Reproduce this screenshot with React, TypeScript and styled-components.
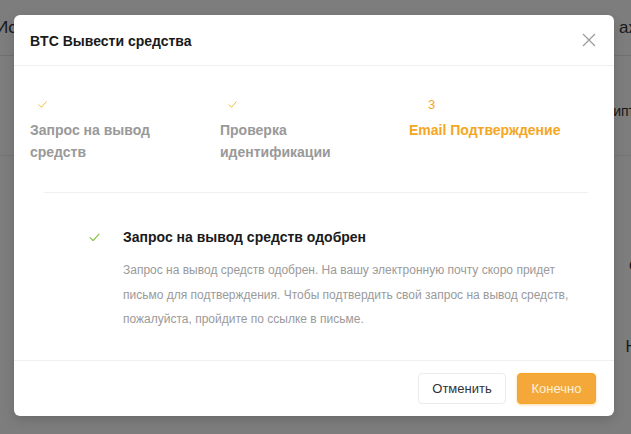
import React from "react";
import styled, { createGlobalStyle } from "styled-components";

const Global = createGlobalStyle`
  html, body { margin: 0; padding: 0; }
  *, *::before, *::after { box-sizing: border-box; }
  body {
    width: 631px; height: 434px; overflow: hidden;
    font-family: "Liberation Sans", Arial, sans-serif;
    background: #ffffff;
  }
`;

const Page = styled.div`
  position: relative;
  width: 631px;
  height: 434px;
  overflow: hidden;
  background: #fafafa;
`;

const PageTop = styled.div`
  display: flex;
  justify-content: space-between;
  align-items: center;
  height: 56px;
  border-bottom: 1px solid #e0e0e0;
  font-size: 17px;
  color: #333;
  margin-left: -4px;
  margin-right: -6px;
`;

const PageRow = styled.div`
  display: flex;
  justify-content: flex-end;
  align-items: center;
  height: 100px;
  padding-top: 10px;
  font-size: 14px;
  color: #333;
  border-bottom: 1px solid #e8e8e8;
  margin-right: -4px;
`;

const PageSide = styled.div`
  display: flex;
  flex-direction: column;
  align-items: flex-end;
  gap: 64px;
  padding-top: 100px;
  font-size: 16px;
  color: #333;
  margin-right: -6px;
`;

const Overlay = styled.div`
  position: absolute;
  inset: 0;
  background: rgba(0, 0, 0, 0.5);
`;

const Modal = styled.div`
  position: absolute;
  left: 14px;
  top: 15px;
  width: 600px;
  height: 401px;
  background: #fff;
  border-radius: 6px;
  display: flex;
  flex-direction: column;
  box-shadow: 0 4px 12px rgba(0, 0, 0, 0.15);
`;

const Header = styled.div`
  display: flex;
  align-items: center;
  justify-content: space-between;
  height: 51px;
  padding: 0 16px;
  border-bottom: 1px solid #f0f0f0;
`;

const Title = styled.div`
  font-size: 14px;
  font-weight: 700;
  color: #1a1a1a;
  padding-top: 1px;
`;

const Close = styled.button`
  border: none;
  background: none;
  padding: 0;
  width: 16px;
  height: 16px;
  display: flex;
  align-items: center;
  justify-content: center;
  cursor: pointer;
  margin-right: 1px;
`;

const Body = styled.div`
  flex: 1;
  padding: 25px 16px 0;
`;

const Steps = styled.div`
  display: grid;
  grid-template-columns: 190px 189px 1fr;
`;

const Step = styled.div`
  display: flex;
  flex-direction: column;
`;

const StepIcon = styled.div<{ $active?: boolean }>`
  height: 26px;
  display: flex;
  align-items: center;
  padding-left: ${(p) => (p.$active ? "19px" : "8px")};
  padding-top: ${(p) => (p.$active ? "0" : "2px")};
  font-size: 13px;
  color: #f5a623;
  margin-bottom: 2px;
`;

const StepTitle = styled.div<{ $active?: boolean }>`
  font-size: 14px;
  font-weight: 700;
  line-height: 22px;
  color: ${(p) => (p.$active ? "#f5a623" : "#999999")};
`;

const Divider = styled.div`
  height: 1px;
  background: #f0f0f0;
  margin: 29px 10px 0 14px;
`;

const Result = styled.div`
  display: grid;
  grid-template-columns: 93px 1fr;
  padding-top: 32px;
`;

const ResultIcon = styled.div`
  height: 24px;
  display: flex;
  align-items: center;
  padding-left: 59px;
`;

const ResultTitle = styled.div`
  font-size: 14px;
  font-weight: 700;
  line-height: 24px;
  color: #1a1a1a;
`;

const ResultText = styled.div`
  grid-column: 2;
  margin-top: 9px;
  font-size: 12px;
  line-height: 24.5px;
  color: #9a9a9a;
  max-width: 450px;
`;

const Footer = styled.div`
  display: flex;
  justify-content: flex-end;
  align-items: center;
  gap: 11px;
  height: 56px;
  padding: 0 18px 1px;
  border-top: 1px solid #f0f0f0;
`;

const Button = styled.button<{ $primary?: boolean }>`
  height: 31px;
  width: ${(p) => (p.$primary ? "79px" : "88px")};
  padding: 0;
  border-radius: 4px;
  font-family: "Liberation Sans", Arial, sans-serif;
  font-size: 13px;
  cursor: pointer;
  border: 1px solid ${(p) => (p.$primary ? "#f5a623" : "#ebebeb")};
  background: ${(p) => (p.$primary ? "#f5a83a" : "#fff")};
  color: ${(p) => (p.$primary ? "#fdf1dd" : "#333")};
  box-shadow: ${(p) => (p.$primary ? "0 1px 3px rgba(245,166,35,0.4)" : "none")};
`;

const Check = ({ color, size = 10 }: { color: string; size?: number }) => (
  <svg width={size} height={size * 0.8} viewBox="0 0 10 8" fill="none">
    <path d="M1 4.2 L3.8 7 L9 1" stroke={color} strokeWidth="1.1" strokeLinecap="round" strokeLinejoin="round" />
  </svg>
);

export default function App() {
  return (
    <>
      <Global />
      <Page>
        <PageTop>
          <span>Ис</span>
          <span>ах</span>
        </PageTop>
        <PageRow>ипт</PageRow>
        <PageSide>
          <span>с</span>
          <span>Н</span>
        </PageSide>
        <Overlay />
        <Modal>
          <Header>
            <Title>BTC Вывести средства</Title>
            <Close aria-label="close">
              <svg width="14" height="14" viewBox="0 0 14 14">
                <path d="M1 1 L13 13 M13 1 L1 13" stroke="#9a9a9a" strokeWidth="1.2" />
              </svg>
            </Close>
          </Header>
          <Body>
            <Steps>
              <Step>
                <StepIcon>
                  <Check color="#f0b83c" size={9} />
                </StepIcon>
                <StepTitle>
                  Запрос на вывод
                  <br />
                  средств
                </StepTitle>
              </Step>
              <Step>
                <StepIcon>
                  <Check color="#f0b83c" size={9} />
                </StepIcon>
                <StepTitle>
                  Проверка
                  <br />
                  идентификации
                </StepTitle>
              </Step>
              <Step>
                <StepIcon $active>3</StepIcon>
                <StepTitle $active>Email Подтверждение</StepTitle>
              </Step>
            </Steps>
            <Divider />
            <Result>
              <ResultIcon>
                <Check color="#8bc34a" size={11} />
              </ResultIcon>
              <ResultTitle>Запрос на вывод средств одобрен</ResultTitle>
              <ResultText>
                Запрос на вывод средств одобрен. На вашу электронную почту скоро придет письмо для
                подтверждения. Чтобы подтвердить свой запрос на вывод средств, пожалуйста, пройдите по
                ссылке в письме.
              </ResultText>
            </Result>
          </Body>
          <Footer>
            <Button>Отменить</Button>
            <Button $primary>Конечно</Button>
          </Footer>
        </Modal>
      </Page>
    </>
  );
}
